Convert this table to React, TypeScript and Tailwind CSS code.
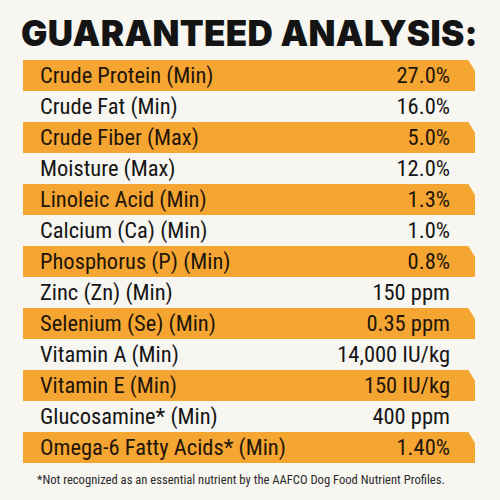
const rows: [string, string][] = [
  ['Crude Protein (Min)', '27.0%'],
  ['Crude Fat (Min)', '16.0%'],
  ['Crude Fiber (Max)', '5.0%'],
  ['Moisture (Max)', '12.0%'],
  ['Linoleic Acid (Min)', '1.3%'],
  ['Calcium (Ca) (Min)', '1.0%'],
  ['Phosphorus (P) (Min)', '0.8%'],
  ['Zinc (Zn) (Min)', '150 ppm'],
  ['Selenium (Se) (Min)', '0.35 ppm'],
  ['Vitamin A (Min)', '14,000 IU/kg'],
  ['Vitamin E (Min)', '150 IU/kg'],
  ['Glucosamine* (Min)', '400 ppm'],
  ['Omega-6 Fatty Acids* (Min)', '1.40%'],
];

export default function App() {
  return (
    <div className="w-[500px] h-[500px] bg-[#f8f6f1] overflow-hidden">
      <h1 className="pl-[21px] pt-[16px] h-[60px] text-[35px] leading-none font-black text-[#141414] font-['Inter',sans-serif] tracking-[0.3px]">
        GUARANTEED ANALYSIS:
      </h1>
      <div className="pl-[23px] pr-[25px] font-['Roboto_Condensed',sans-serif]">
        {rows.map(([name, value], i) => (
          <div
            key={name}
            className={
              'h-[31px] flex items-center justify-between pl-[17px] pr-[25px] text-[22.5px] ' +
              (i % 2 === 0
                ? 'bg-[#f5a531] text-[#1f150a] [clip-path:polygon(0_0,98.5%_0,100%_35%,100%_100%,0_100%)]'
                : 'text-[#151515]')
            }
          >
            <span>{name}</span>
            <span>{value}</span>
          </div>
        ))}
      </div>
      <p className="pl-[37px] pt-[8px] text-[12.6px] text-[#2b2b2b] font-['Roboto_Condensed',sans-serif]">
        *Not recognized as an essential nutrient by the AAFCO Dog Food Nutrient Profiles.
      </p>
    </div>
  );
}
